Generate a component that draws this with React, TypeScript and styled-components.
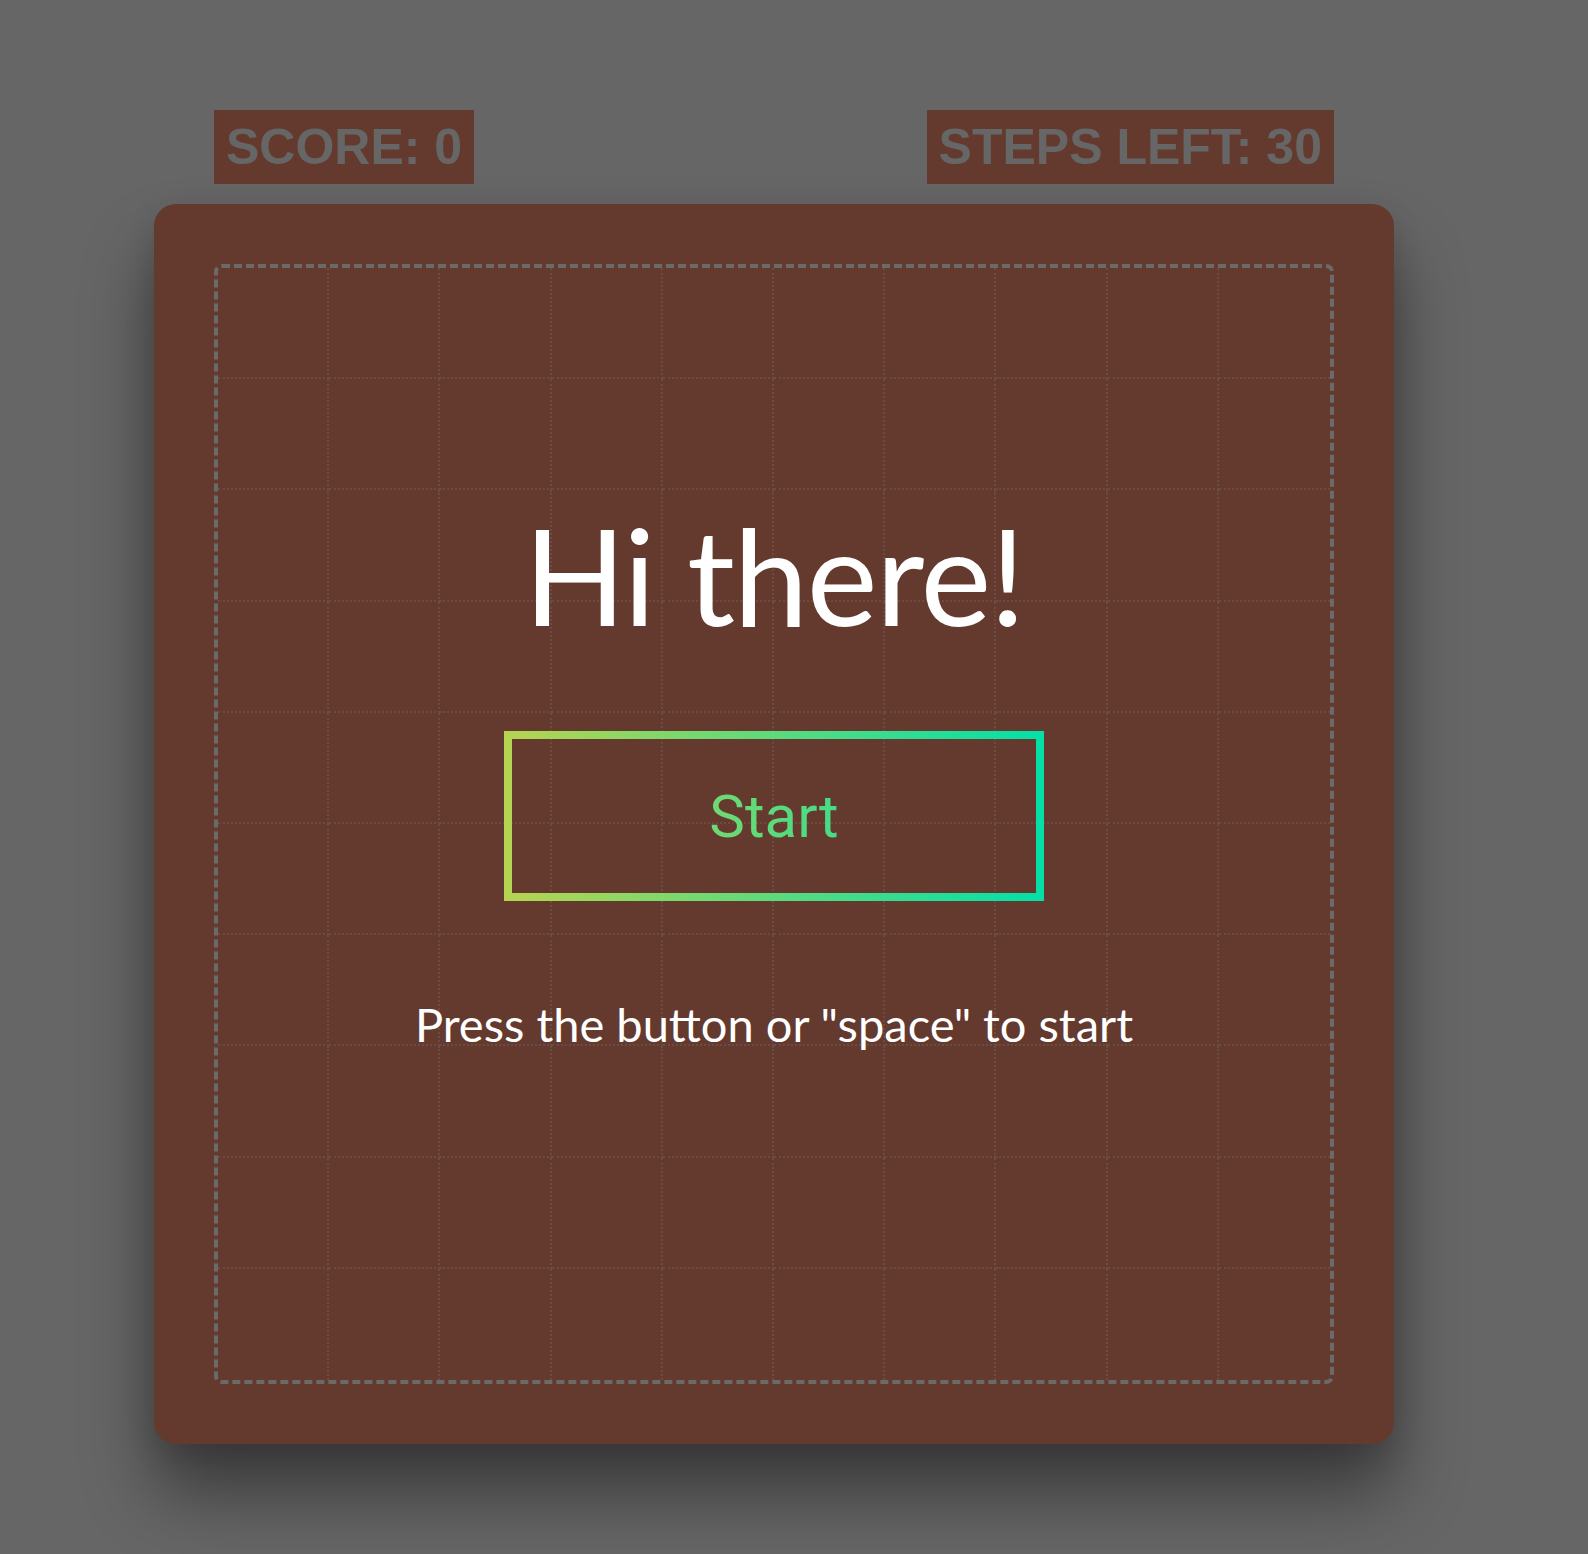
import React from 'react';
import styled, { createGlobalStyle } from 'styled-components';

const GlobalStyle = createGlobalStyle`
  html, body {
    margin: 0;
    padding: 0;
    background: #666666;
  }
  body {
    min-height: 100vh;
  }
`;

const Page = styled.div`
  padding: 110px 0 0 154px;
  min-height: 1554px;
  box-sizing: border-box;
`;

const Header = styled.div`
  width: 1120px;
  margin-left: 60px;
  display: flex;
  justify-content: space-between;
  margin-bottom: 20px;
`;

const Counter = styled.div`
  background: #653a2e;
  color: #666666;
  font-family: 'Liberation Sans', Arial, sans-serif;
  font-weight: bold;
  font-size: 50px;
  line-height: 58px;
  padding: 8px 12px;
`;

const Card = styled.div`
  width: 1240px;
  height: 1240px;
  box-sizing: border-box;
  padding: 60px;
  background: #643a2f;
  border-radius: 22px;
  box-shadow: 0 50px 70px rgba(0, 0, 0, 0.42), 0 10px 30px rgba(0, 0, 0, 0.12);
`;

const Board = styled.div`
  position: relative;
  width: 100%;
  height: 100%;
  box-sizing: border-box;
  border: 4px dashed #6a6a6a;
  border-radius: 8px;
`;

const Grid = styled.div`
  position: absolute;
  inset: 0;
  display: grid;
  grid-template-columns: repeat(10, 1fr);
  grid-template-rows: repeat(10, 1fr);
`;

const Cell = styled.div`
  border-right: 2px dotted rgba(115, 105, 95, 0.4);
  border-bottom: 2px dotted rgba(115, 105, 95, 0.4);
  &:nth-child(10n) {
    border-right: none;
  }
  &:nth-child(n + 91) {
    border-bottom: none;
  }
`;

const Content = styled.div`
  position: relative;
  display: flex;
  flex-direction: column;
  align-items: center;
  padding-top: 240px;
  font-family: Lato, 'Open Sans', sans-serif;
  color: #ffffff;
`;

const Title = styled.h1`
  margin: 0;
  font-size: 134px;
  line-height: 1;
  font-weight: 400;
  letter-spacing: -1.5px;
`;

const StartButton = styled.button`
  margin-top: 89px;
  width: 540px;
  height: 170px;
  box-sizing: border-box;
  border: 8px solid;
  border-image: linear-gradient(90deg, #b4d452, #04e0a8) 1;
  background: linear-gradient(90deg, #b4d452, #04e0a8);
  -webkit-background-clip: text;
  background-clip: text;
  color: transparent;
  font-family: Roboto, sans-serif;
  font-size: 60px;
  padding: 0;
  cursor: pointer;
`;

const Hint = styled.p`
  margin: 100px 0 0;
  font-size: 47px;
  line-height: 1;
  font-weight: 400;
`;

const App: React.FC = () => (
  <Page>
    <GlobalStyle />
    <Header>
      <Counter>SCORE: 0</Counter>
      <Counter>STEPS LEFT: 30</Counter>
    </Header>
    <Card>
      <Board>
        <Grid>
          {Array.from({ length: 100 }, (_, i) => (
            <Cell key={i} />
          ))}
        </Grid>
        <Content>
          <Title>Hi there!</Title>
          <StartButton>Start</StartButton>
          <Hint>Press the button or "space" to start</Hint>
        </Content>
      </Board>
    </Card>
  </Page>
);

export default App;
